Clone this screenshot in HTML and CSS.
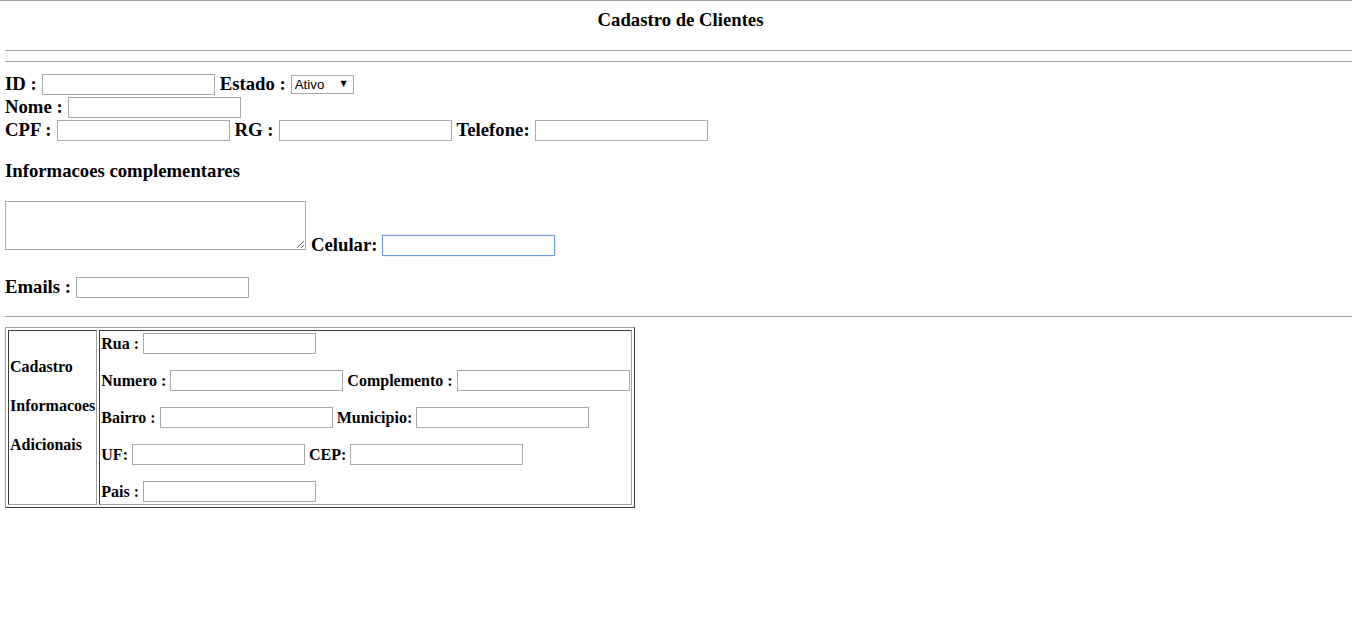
FILE: index.html
```html
<!DOCTYPE html>
<html lang="pt">
<head>
<meta charset="utf-8">
<title>Cadastro de Clientes</title>
<link rel="stylesheet" href="styles.css">
</head>
<body>
<div class="page">
  <h3 class="title">Cadastro de Clientes</h3>
  <hr class="rule rule-a">
  <hr class="rule rule-b">

  <div class="row row-first">
    <span class="lbl">ID :</span><input class="field" type="text">
    <span class="lbl">Estado :</span>
    <span class="select-wrap"><select class="select"><option>Ativo</option></select><span class="arrow">▼</span></span>
  </div>
  <div class="row">
    <span class="lbl">Nome :</span><input class="field" type="text">
  </div>
  <div class="row">
    <span class="lbl">CPF :</span><input class="field" type="text">
    <span class="lbl">RG :</span><input class="field" type="text">
    <span class="lbl">Telefone:</span><input class="field" type="text">
  </div>

  <h3 class="section">Informacoes complementares</h3>

  <div class="row-area">
    <textarea class="area"></textarea>
    <span class="group"><span class="lbl">Celular:</span><input class="field focused" type="text"></span>
  </div>

  <div class="row row-email">
    <span class="lbl">Emails :</span><input class="field" type="text">
  </div>

  <hr class="rule rule-c">

  <table class="addr">
    <tr>
      <td class="side">
        <div class="side-text">
          <b>Cadastro</b>
          <b>Informacoes</b>
          <b>Adicionais</b>
        </div>
      </td>
      <td class="main">
        <div class="lines">
          <div class="trow"><b>Rua :</b><input class="field" type="text"></div>
          <div class="trow"><b>Numero :</b><input class="field" type="text"><b>Complemento :</b><input class="field" type="text"></div>
          <div class="trow"><b>Bairro :</b><input class="field" type="text"><b>Municipio:</b><input class="field" type="text"></div>
          <div class="trow"><b>UF:</b><input class="field" type="text"><b>CEP:</b><input class="field" type="text"></div>
          <div class="trow"><b>Pais :</b><input class="field" type="text"></div>
        </div>
      </td>
    </tr>
  </table>
</div>
</body>
</html>
```
FILE: styles.css
```css
html, body {
  margin: 0;
  padding: 0;
  background: #fff;
}
body {
  border-top: 1px solid #a3a3a3;
  font-family: "Liberation Serif", "Times New Roman", serif;
  color: #000;
}
.page {
  padding-left: 5px;
}
.title {
  margin: 8px 0 0;
  padding-left: 4px;
  font-size: 18.72px;
  line-height: 22px;
  font-weight: bold;
  text-align: center;
}
.rule {
  border: 0;
  border-top: 1px solid #a0a0a0;
  height: 0;
  margin: 0;
}
.rule-a { margin-top: 19px; }
.rule-b { margin-top: 10px; }
.rule-c { margin-top: 17px; }

.row {
  display: flex;
  align-items: center;
  gap: 5px;
  height: 23px;
  white-space: nowrap;
}
.row-first { margin-top: 11px; }
.lbl {
  font-size: 18.72px;
  font-weight: bold;
  line-height: 22px;
  padding-bottom: 2px;
}
.field {
  box-sizing: border-box;
  width: 173px;
  height: 21px;
  margin: 0;
  padding: 1px 2px;
  border: 1px solid #a9a9a9;
  background: #fff;
  font-family: "Liberation Sans", Arial, sans-serif;
  font-size: 13.33px;
  outline: none;
}
.field.focused {
  border-color: #6e9be0;
  box-shadow: 0 0 1px #9ab8ea;
}
.select-wrap {
  position: relative;
  display: inline-block;
  width: 63px;
  height: 19px;
}
.select {
  appearance: none;
  -webkit-appearance: none;
  box-sizing: border-box;
  width: 63px;
  height: 19px;
  margin: 0;
  padding: 0 0 0 3px;
  border: 1px solid #a9a9a9;
  border-radius: 0;
  background: #fff;
  font-family: "Liberation Sans", Arial, sans-serif;
  font-size: 13.33px;
  color: #000;
}
.arrow {
  position: absolute;
  right: 7px;
  top: 4px;
  font-size: 8px;
  line-height: 10px;
  color: #000;
  pointer-events: none;
  font-family: "DejaVu Sans", sans-serif;
}
.section {
  margin: 18px 0 0;
  font-size: 18.72px;
  line-height: 22px;
  font-weight: bold;
}
.row-area {
  display: flex;
  align-items: flex-end;
  gap: 5px;
  margin-top: 19px;
}
.area {
  box-sizing: border-box;
  width: 301px;
  height: 49px;
  margin: 0 0 6px;
  padding: 2px;
  border: 1px solid #a9a9a9;
  font-family: "Liberation Mono", monospace;
  font-size: 13.33px;
  resize: both;
}
.group {
  display: flex;
  align-items: center;
  gap: 5px;
  height: 21px;
}
.row-email { margin-top: 20px; }

.addr {
  margin-top: 10px;
  border-collapse: separate;
  border-spacing: 2px;
  border: 1px solid;
  border-color: #a0a0a0 #3c3c3c #3c3c3c #a0a0a0;
}
.addr td {
  padding: 1px;
  border: 1px solid;
  border-color: #3c3c3c #a0a0a0 #a0a0a0 #3c3c3c;
  font-size: 16px;
}
.side {
  vertical-align: top;
  padding-right: 2px;
}
.side-text {
  display: flex;
  flex-direction: column;
  gap: 21px;
  margin-top: 26px;
  line-height: 18px;
}
.main {
  vertical-align: top;
}
.lines {
  display: flex;
  flex-direction: column;
  gap: 14px;
}
.trow {
  display: flex;
  align-items: center;
  gap: 4px;
  height: 23px;
  white-space: nowrap;
  line-height: 18px;
}
```
